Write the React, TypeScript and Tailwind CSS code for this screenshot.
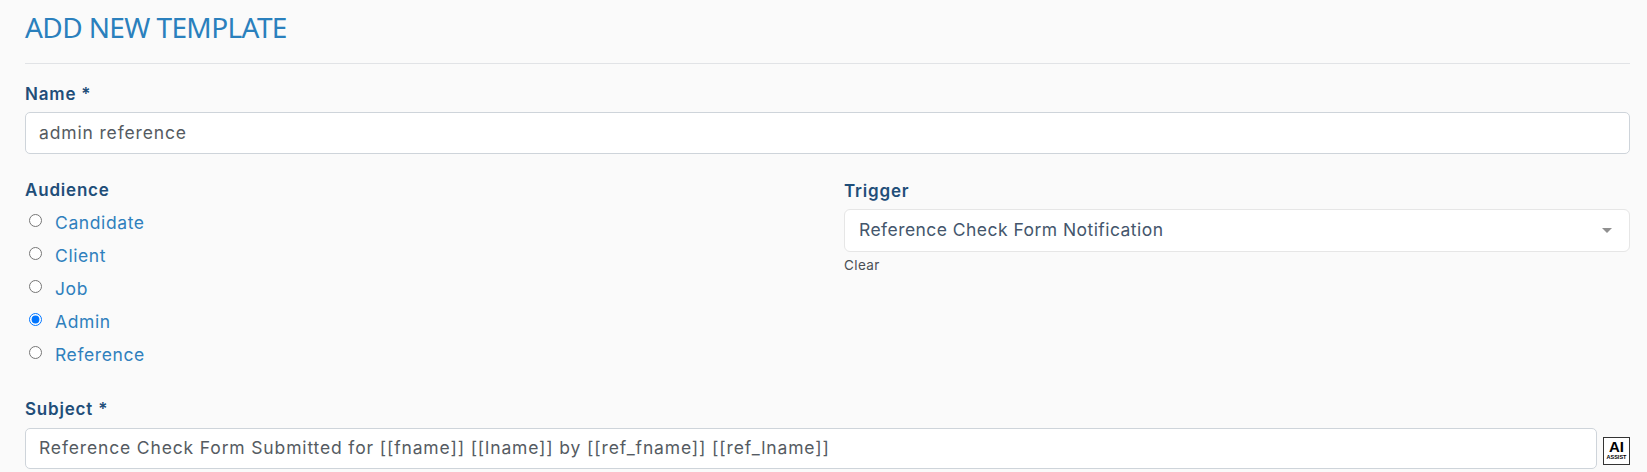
const audiences = ['Candidate', 'Client', 'Job', 'Admin', 'Reference']

const labelClass = "block font-['Inter',sans-serif] text-[17px] leading-[24px] font-semibold tracking-[0.8px] text-[#1f4e79]"
const fieldClass = "block w-full rounded-[5px] border border-[#ced4da] bg-white px-[13px] pb-[2px] font-['Inter',sans-serif] text-[17.5px] tracking-[0.85px] text-[#555b62] outline-none"

export default function App() {
  return (
    <div className="min-h-[472px] bg-[#fafafa] pr-[17px] pl-[25px]">
      <h1 className="pt-[8px] font-['Noto_Sans',sans-serif] text-[28px] leading-[38px] tracking-[-0.6px] text-[#2a80bd]">ADD NEW TEMPLATE</h1>
      <hr className="mt-[17px] border-t border-[#e1e3e6]" />

      <label className="mt-[18px] mb-[6px] block">
        <span className={labelClass}>Name *</span>
      </label>
      <input readOnly value="admin reference" className={`${fieldClass} h-[42px]`} />

      <div className="mt-[24px] flex">
        <div className="w-[819px]">
          <span className={labelClass}>Audience</span>
          <ul className="mt-[9px] mb-[1px] flex flex-col gap-[9px]">
            {audiences.map((a) => (
              <li key={a} className="flex h-[24px] items-center">
                <input type="radio" name="audience" defaultChecked={a === 'Admin'} className="mt-[-6px] ml-[4px] h-[13px] w-[13px]" />
                <span className="ml-[13px] font-['Inter',sans-serif] text-[17.5px] tracking-[0.6px] text-[#2f80bd]">{a}</span>
              </li>
            ))}
          </ul>
        </div>

        <div className="flex-1 pt-[1px]">
          <span className={labelClass}>Trigger</span>
          <div className="mt-[6px] flex h-[43px] items-center justify-between rounded-[6px] border border-[#e6e6e6] bg-white pr-[17px] pl-[14px]">
            <span className="font-['Inter',sans-serif] text-[17.5px] tracking-[0.45px] text-[#44566c]">Reference Check Form Notification</span>
            <span className="h-0 w-0 border-x-[5px] border-t-[5px] border-x-transparent border-t-[#909090]" />
          </div>
          <span className="mt-[4px] block font-['Inter',sans-serif] text-[13.5px] leading-[18px] tracking-[0.4px] text-[#4a4f55]">Clear</span>
        </div>
      </div>

      <label className="mt-[29px] mb-[7px] block">
        <span className={labelClass}>Subject *</span>
      </label>
      <div className="flex items-center gap-[6px]">
        <input
          readOnly
          value="Reference Check Form Submitted for [[fname]] [[lname]] by [[ref_fname]] [[ref_lname]]"
          className={`${fieldClass} h-[41px] flex-1`}
        />
        <div className="mt-[4px] flex h-[28px] w-[27px] flex-col items-center justify-center border border-[#333] bg-white font-['Liberation_Sans',sans-serif] leading-none font-bold text-black">
          <span className="text-[15px] leading-[14px]">AI</span>
          <span className="text-[5.5px] leading-[7px]">ASSIST</span>
        </div>
      </div>
    </div>
  )
}
